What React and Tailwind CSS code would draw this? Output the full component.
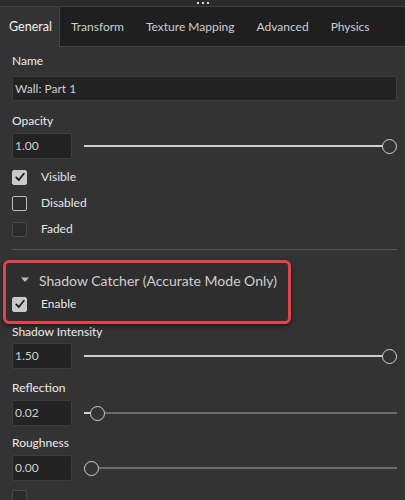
import React from "react"

const font = { fontFamily: 'Lato, "Noto Sans", sans-serif' }

function CheckIcon() {
  return (
    <svg width="12" height="12" viewBox="0 0 12 12" fill="none">
      <path d="M2.2 6.4L4.8 9L9.8 2.8" stroke="#1e1e1e" strokeWidth="1.8" strokeLinecap="round" strokeLinejoin="round" />
    </svg>
  )
}

function Check({ label, state }) {
  let box = "border-[#bdbdbd] bg-[#2d2d2d]"
  if (state === "on") box = "border-[#c9c9c9] bg-[#c9c9c9]"
  if (state === "faded") box = "border-[#4a4a4a] bg-[#2b2b2b]"
  return (
    <div className="flex items-center h-[16px]">
      <div className={"w-[15px] h-[15px] rounded-[2px] border flex items-center justify-center " + box}>
        {state === "on" && <CheckIcon />}
      </div>
      <span className="ml-[14px] text-[12px] text-[#e6e6e6] whitespace-nowrap">{label}</span>
    </div>
  )
}

function Slider({ value, pct }) {
  return (
    <div className="flex items-center h-[26px] mr-[-4px]">
      <div className="w-[60px] h-[26px] shrink-0 bg-[#232323] border border-[#3d3d3d] rounded-[2px] flex items-center pl-[2px] text-[12px] text-[#cfcfcf]">
        {value}
      </div>
      <div className="relative flex-1 ml-[12px] h-[16px] flex items-center">
        <div className="w-full h-[2px] bg-[#6c6c6c]" />
        <div className="absolute left-0 h-[2px] bg-[#cfcfcf]" style={{ width: `calc((100% - 15px) * ${pct / 100} + 7px)` }} />
        <div
          className="absolute w-[15px] h-[15px] rounded-full border-[1.5px] border-[#d0d0d0] bg-[#333333]"
          style={{ left: `calc((100% - 15px) * ${pct / 100})` }}
        />
      </div>
    </div>
  )
}

export default function App() {
  const tabs = ["Transform", "Texture Mapping", "Advanced", "Physics"]
  return (
    <div className="w-[405px] h-[500px] overflow-hidden bg-[#333333] flex flex-col" style={font}>
      {/* drag handle */}
      <div className="h-[6px] shrink-0 bg-[#2b2b2b] border-b border-[#3f3f3f] flex items-center justify-center gap-[3px] box-content">
        <span className="w-[2px] h-[2px] bg-[#d8d8d8]" />
        <span className="w-[2px] h-[2px] bg-[#d8d8d8]" />
        <span className="w-[2px] h-[2px] bg-[#d8d8d8]" />
      </div>

      {/* tabs */}
      <div className="flex shrink-0 h-[40px] bg-[#1f1f1f] border-b border-[#444444] text-[12px] whitespace-nowrap box-border">
        <div className="w-[60px] shrink-0 bg-[#333333] border-r border-[#444444] -mb-px flex items-center pl-[9px] text-[#f0f0f0] text-[12.5px]">
          General
        </div>
        {tabs.map((t) => (
          <div key={t} className="px-[11px] shrink-0 flex items-center text-[#cfcfcf]">
            {t}
          </div>
        ))}
      </div>

      <div className="px-[12px] pt-[5px] flex flex-col">
        <div className="text-[12px] text-[#ececec] leading-[18px]">Name</div>
        <div className="mt-[6px] mr-[-4px] h-[25px] bg-[#232323] border border-[#3d3d3d] rounded-[2px] flex items-center pl-[2px] text-[12px] text-[#cfcfcf]">
          Wall: Part 1
        </div>

        <div className="mt-[11px] text-[12px] text-[#ececec] leading-[18px]">Opacity</div>
        <div className="mt-[3px]">
          <Slider value="1.00" pct={100} />
        </div>

        <div className="mt-[10px] flex flex-col gap-[10px]">
          <Check label="Visible" state="on" />
          <Check label="Disabled" state="off" />
          <Check label="Faded" state="faded" />
        </div>

        <div className="mt-[12px] h-px bg-[#555555] mr-[-4px]" />

        <div className="relative mt-[10px] -ml-[9px] w-[288px] h-[64px] border-[3px] border-[#e5434b] rounded-[6px] bg-[#2e2e2e] shadow-[0_2px_4px_rgba(0,0,0,0.5)]">
          <div className="flex items-center h-[30px] mt-[2px] pl-[14px]">
            <svg width="10" height="6" viewBox="0 0 10 6">
              <path d="M1 0.5H9L5 5Z" fill="#bdbdbd" />
            </svg>
            <span className="ml-[9px] text-[14px] text-[#cfcfcf] whitespace-nowrap">Shadow Catcher (Accurate Mode Only)</span>
          </div>
          <div className="pl-[6px] mt-[1px]">
            <Check label="Enable" state="on" />
          </div>
        </div>

        <div className="mt-[-1px] text-[12px] text-[#ececec] leading-[18px]">Shadow Intensity</div>
        <div className="mt-[2px]">
          <Slider value="1.50" pct={100} />
        </div>

        <div className="mt-[10px] text-[12px] text-[#ececec] leading-[18px]">Reflection</div>
        <div className="mt-[3px]">
          <Slider value="0.02" pct={2} />
        </div>

        <div className="mt-[8px] text-[12px] text-[#ececec] leading-[18px]">Roughness</div>
        <div className="mt-[3px]">
          <Slider value="0.00" pct={0} />
        </div>

        <div className="mt-[8px]">
          <Check label="" state="faded" />
        </div>
      </div>
    </div>
  )
}
